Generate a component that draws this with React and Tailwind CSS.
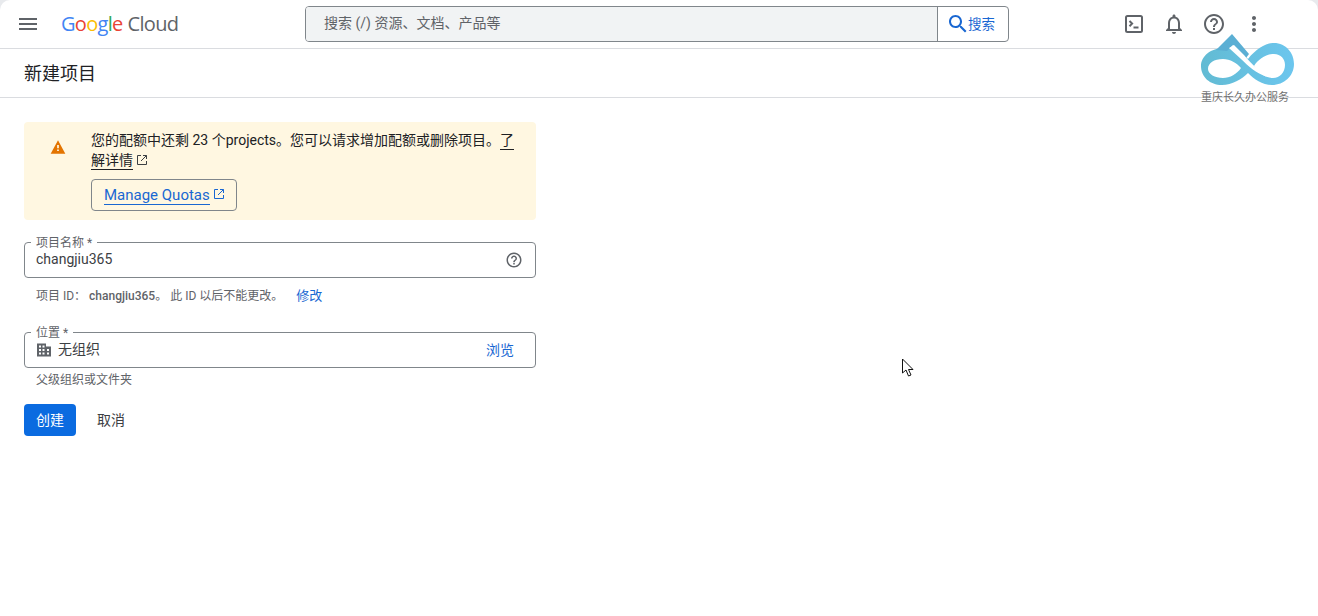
const font = "font-['Roboto','Noto_Sans_CJK_SC',sans-serif]"

// material paths, lucide's are too round for these
function Mi({ d, className }) {
  return (
    <svg viewBox="0 0 24 24" className={className} fill="currentColor">
      <path d={d} />
    </svg>
  )
}

const helpPath =
  'M11 18h2v-2h-2v2zm1-16C6.48 2 2 6.48 2 12s4.48 10 10 10 10-4.48 10-10S17.52 2 12 2zm0 18c-4.41 0-8-3.59-8-8s3.59-8 8-8 8 3.59 8 8-3.59 8-8 8zm0-14c-2.21 0-4 1.79-4 4h2c0-1.1.9-2 2-2s2 .9 2 2c0 2-3 1.75-3 5h2c0-2.25 3-2.5 3-5 0-2.21-1.79-4-4-4z'
const menuPath = 'M3 18h18v-2H3v2zm0-5h18v-2H3v2zm0-7v2h18V6H3z'
const bellPath =
  'M12 22c1.1 0 2-.9 2-2h-4c0 1.1.9 2 2 2zm6-6v-5c0-3.07-1.63-5.64-4.5-6.32V4c0-.83-.67-1.5-1.5-1.5s-1.5.67-1.5 1.5v.68C7.64 5.36 6 7.92 6 11v5l-2 2v1h16v-1l-2-2zm-2 1H8v-6c0-2.48 1.51-4.5 4-4.5s4 2.02 4 4.5v6z'
const dotsPath =
  'M12 8c1.1 0 2-.9 2-2s-.9-2-2-2-2 .9-2 2 .9 2 2 2zm0 2c-1.1 0-2 .9-2 2s.9 2 2 2 2-.9 2-2-.9-2-2-2zm0 6c-1.1 0-2 .9-2 2s.9 2 2 2 2-.9 2-2-.9-2-2-2z'
const searchPath =
  'M15.5 14h-.79l-.28-.27C15.41 12.59 16 11.110 16 9.5 16 5.91 13.09 3 9.5 3S3 5.91 3 9.5 5.91 16 9.5 16c1.61 0 3.09-.59 4.23-1.57l.27.28v.79l5 4.99L20.49 19l-4.99-5zm-6 0C7.01 14 5 11.99 5 9.5S7.01 5 9.5 5 14 7.01 14 9.5 11.99 14 9.5 14z'

function ExtIcon({ className }) {
  return (
    <svg viewBox="0 0 24 24" className={className} fill="none" stroke="currentColor" strokeWidth="2">
      <path d="M10 3H3v18h18v-7" />
      <path d="M14 3h7v7M21 3 10 14" />
    </svg>
  )
}

function Watermark() {
  return (
    <div className="absolute left-[1196px] top-[33px] w-[104px] flex flex-col items-start">
      <svg viewBox="0 0 104 53" className="w-[104px] h-[53px]">
        <defs>
          <linearGradient id="wm" x1="0" x2="1" y1="0" y2="0">
            <stop offset="0" stopColor="#62bbd3" />
            <stop offset="1" stopColor="#6cc6ee" />
          </linearGradient>
        </defs>
        <path
          fillRule="evenodd"
          fill="url(#wm)"
          d="M28 15 C38 15 46 20 52 26 C60 16 70 10 78 10 C90 10 98 20 98 31 C98 43 88 52 76 52 C66 52 58 46 52 40 C46 46 36 52 26 52 C14 52 5 44 5 33 C5 23 15 15 28 15 Z M27 26 C18 26 12 30 12 36 C12 41 19 45 27 45 C34 45 41 41 45 35 C41 30 34 26 27 26 Z M78 21 C69 21 62 27 58 33 C62 39 69 45 77 45 C84 45 89 39 89 32 C89 26 85 21 78 21 Z"
        />
        <path d="M36 1 L20 17 L31 18 L37 12 L50 25 L53 21 Z" fill="#5bafd4" />
        <path d="M33 15 L38 12 L48 22 C56 32 64 38 71 44 C60 40 52 33 45 26 Z" fill="#ffffff" />
      </svg>
      <span className={`${font} text-[11px] leading-[14px] mt-[5px] ml-[5px] text-[#6f6f6f] whitespace-nowrap`}>重庆长久办公服务</span>
    </div>
  )
}

function Cursor() {
  return (
    <svg viewBox="0 0 14 20" className="absolute left-[901px] top-[358px] w-[14px] h-[20px]">
      <path d="M1.5 1 V15 L5 12 L7.5 18 L10 17 L7.5 11.5 H12 Z" fill="#fff" stroke="#111" strokeWidth="1" />
    </svg>
  )
}

function Header() {
  return (
    <header className="h-[49px] border-b border-[#dadce0] flex items-center">
      <button className="ml-[16px] w-[24px] h-[24px] text-[#5f6368]">
        <Mi d={menuPath} className="w-[24px] h-[24px]" />
      </button>
      <div className="ml-[21px] w-[244px] flex items-baseline font-['Open_Sans',sans-serif] text-[20px] leading-[24px] tracking-[-0.7px] whitespace-nowrap">
        <span className="text-[#4285f4]">G</span>
        <span className="text-[#ea4335]">o</span>
        <span className="text-[#fbbc05]">o</span>
        <span className="text-[#4285f4]">g</span>
        <span className="text-[#34a853]">l</span>
        <span className="text-[#ea4335]">e</span>
        <span className="ml-[5px] text-[#5f6368]">Cloud</span>
      </div>
      <div className="flex w-[704px] h-[36px] border border-[#80868b] rounded-[4px] overflow-hidden">
        <div className={`${font} flex-1 bg-[#f1f3f4] pl-[18px] pb-[2px] flex items-center text-[14px] text-[#5f6368]`}>
          搜索 (/) 资源、文档、产品等
        </div>
        <div className={`${font} w-[71px] border-l border-[#80868b] flex items-center pl-[8px] text-[13.5px] text-[#1967d2]`}>
          <Mi d={searchPath} className="w-[24px] h-[24px] mr-[-2px] shrink-0" />
          搜索
        </div>
      </div>
      <div className="ml-[113px] flex items-center gap-[16px] text-[#5f6368]">
        <svg viewBox="0 0 24 24" className="w-[24px] h-[24px]" fill="none" stroke="currentColor" strokeWidth="2">
          <rect x="4" y="4" width="16" height="16" rx="1.5" />
          <path d="m7.5 9 2.6 2.6-2.6 2.6" />
          <path d="M11.5 15.5h5" />
        </svg>
        <Mi d={bellPath} className="w-[24px] h-[24px]" />
        <Mi d={helpPath} className="w-[24px] h-[24px]" />
        <Mi d={dotsPath} className="w-[24px] h-[24px]" />
      </div>
    </header>
  )
}

function Notice() {
  return (
    <div className="w-[512px] h-[98px] bg-[#fff7e1] rounded-[4px] flex">
      <div className="w-[67px] pt-[17px] pl-[26px] text-[#e37400]">
        <svg viewBox="0 0 24 24" className="w-[16px] h-[16px]" fill="currentColor">
          <path d="M12 2 1 22h22L12 2Zm1.3 16h-2.6v-2.4h2.6V18Zm0-4h-2.6V9h2.6v5Z" />
        </svg>
      </div>
      <div className="flex-1 pt-[8px] pr-[20px]">
        <p className="text-[14px] leading-[20px] text-[#202124]">
          您的配额中还剩 23 个projects。您可以请求增加配额或删除项目。
          <span className="border-b border-[#202124] pb-[1px]">了解详情</span>
          <ExtIcon className="inline-block w-[12px] h-[12px] ml-[3px] text-[#3c4043] align-[-1px]" />
        </p>
        <button className="mt-[9px] h-[32px] w-[146px] border border-[#80868b] rounded-[4px] flex items-center pl-[12px] pt-[1px] text-[15px] text-[#1967d2]">
          <span className="border-b border-[#1967d2] leading-[17px]">Manage Quotas</span>
          <ExtIcon className="w-[12px] h-[12px] ml-[3px] mb-[3px]" />
        </button>
      </div>
    </div>
  )
}

function FieldBox({ label, children }) {
  return (
    <div className="relative w-[512px] h-[36px] border border-[#80868b] rounded-[4px] flex items-center pl-[11px] pr-[12px]">
      <span className="absolute left-[6px] top-[-7px] px-[5px] bg-white text-[12px] leading-[14px] text-[#5f6368]">{label}</span>
      {children}
    </div>
  )
}

function Form() {
  return (
    <main className={`${font} pl-[24px] pt-[24px]`}>
      <Notice />
      <div className="mt-[22px]">
        <FieldBox label="项目名称 *">
          <span className="flex-1 mb-[2px] text-[14px] text-[#3c4043]">changjiu365</span>
          <Mi d={helpPath} className="w-[18px] h-[18px] text-[#5f6368]" />
        </FieldBox>
        <div className="mt-[8px] pl-[12px] flex items-center h-[20px] text-[12px] text-[#5f6368] whitespace-nowrap">
          <span>
            项目 ID： <span className="font-medium">changjiu365</span>。 此 ID 以后不能更改。
          </span>
          <span className="ml-[13px] text-[13px] text-[#1967d2]">修改</span>
        </div>
      </div>
      <div className="mt-[26px]">
        <FieldBox label="位置 *">
          <svg viewBox="1 2 14 13" className="w-[14px] h-[14px] text-[#5f6368] mr-[7px] ml-[1px]" fill="currentColor">
            <path
              fillRule="evenodd"
              d="M1 2h9v3h5v10H1V2Zm2 2v2h2V4H3Zm3.5 0v2h2V4h-2ZM3 7.5v2h2v-2H3Zm3.5 0v2h2v-2h-2Zm4.5 0v2h2v-2h-2ZM3 11v2h2v-2H3Zm3.5 0v2h2v-2h-2Zm4.5 0v2h2v-2h-2Z"
            />
          </svg>
          <span className="flex-1 mb-[2px] text-[14px] text-[#3c4043]">无组织</span>
          <span className="mr-[9px] text-[14px] text-[#1967d2]">浏览</span>
        </FieldBox>
        <div className="mt-[2px] pl-[12px] h-[20px] flex items-center text-[12px] text-[#5f6368]">父级组织或文件夹</div>
      </div>
      <div className="mt-[14px] flex items-center">
        <button className="w-[52px] h-[32px] rounded-[4px] bg-[#0b6be0] text-white text-[14px]">创建</button>
        <button className="ml-[21px] text-[14px] text-[#3c4043]">取消</button>
      </div>
    </main>
  )
}

export default function App() {
  return (
    <div className="w-[1318px] h-[616px] bg-[#e8eaed] overflow-hidden">
      <div className="relative h-full bg-white rounded-t-[10px]">
        <Header />
        <div className="h-[49px] border-b border-[#dadce0] pl-[24px] flex items-center">
          <h1 className={`${font} text-[18px] text-[#202124]`}>新建项目</h1>
        </div>
        <Form />
        <Watermark />
        <Cursor />
      </div>
    </div>
  )
}
